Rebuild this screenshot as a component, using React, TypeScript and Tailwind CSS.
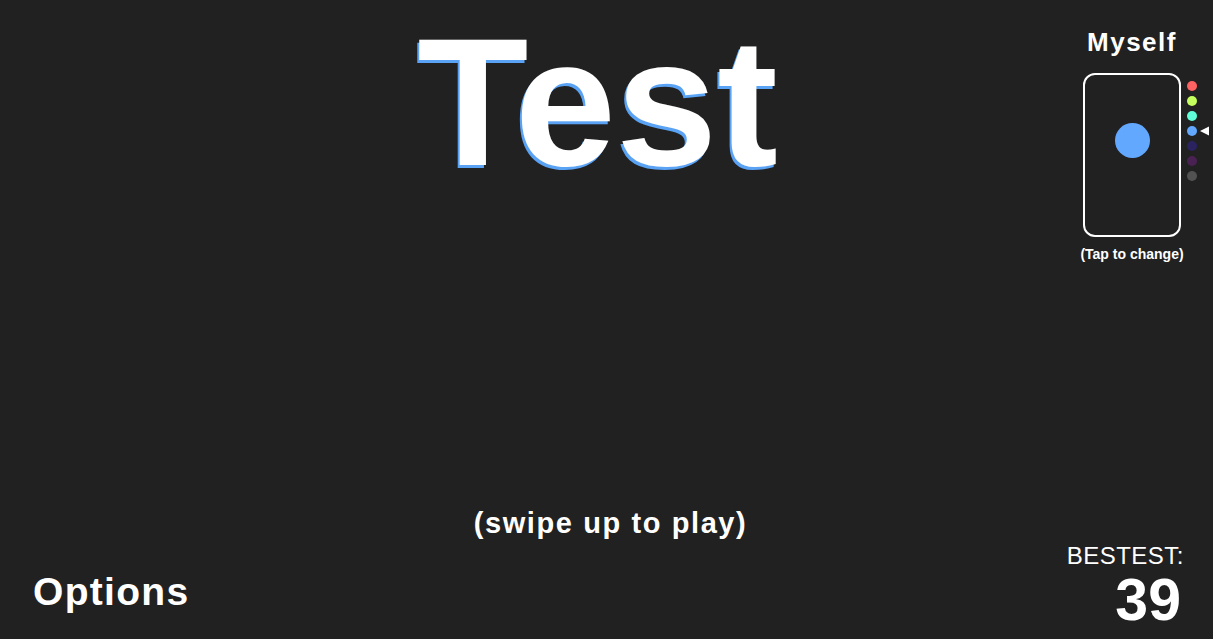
import React from "react";

const dots = ["#ff6262", "#c4ff5e", "#5effd9", "#62a8ff", "#2a2360", "#4a2153", "#525252"];

export default function App() {
  return (
    <div
      className="relative flex h-[639px] w-[1213px] flex-col overflow-hidden bg-[#212121] text-white"
      style={{ fontFamily: '"Liberation Sans", Arial, sans-serif' }}
    >
      <div className="flex h-[270px] flex-row">
        <div className="flex flex-1 justify-center pt-[11px] pl-[120px]">
          <div
            className="text-[182px] font-bold leading-none"
            style={{ textShadow: "-2px 3px 0 #5aa2f4" }}
          >
            Test
          </div>
        </div>
        <div className="flex w-[138px] flex-col pt-[28px]">
          <div className="w-[114px] text-center text-[26px] font-bold leading-[28px] tracking-[1.5px]">Myself</div>
          <div className="mt-[17px] flex flex-row items-start pl-[8px]">
            <div className="flex h-[164px] w-[98px] flex-col items-center rounded-[12px] border-2 border-white pt-[48px]">
              <div className="h-[35px] w-[35px] rounded-full bg-[#62a8ff]" />
            </div>
            <div className="ml-[6px] mt-[8px] flex flex-col gap-[5px]">
              {dots.map((c, i) => (
                <div key={i} className="relative h-[10px] w-[10px] rounded-full" style={{ backgroundColor: c }}>
                  {i === 3 && (
                    <svg className="absolute left-[13px] top-0" width="9" height="10" viewBox="0 0 9 10">
                      <polygon points="0,5 9,0.5 9,9.5" fill="#ffffff" />
                    </svg>
                  )}
                </div>
              ))}
            </div>
          </div>
          <div className="mt-[9px] w-[114px] text-center text-[14px] font-bold leading-[16px]">(Tap to change)</div>
        </div>
      </div>
      <div className="flex-1" />
      <div className="mb-[4px] flex justify-center pl-[8px] text-[29px] font-bold leading-[32px] tracking-[1.6px]">
        (swipe up to play)
      </div>
      <div className="flex flex-row items-end justify-between pb-[13px] pl-[33px] pr-[29px]">
        <div className="mb-[12px] text-[39px] font-bold leading-[44px] tracking-[1.3px]">Options</div>
        <div className="flex flex-col items-end">
          <div className="text-[24px] leading-[26px] tracking-[0.5px]">BESTEST:</div>
          <div className="mt-[5px] pr-[3px] text-[59px] font-bold leading-[52px]">39</div>
        </div>
      </div>
    </div>
  );
}
